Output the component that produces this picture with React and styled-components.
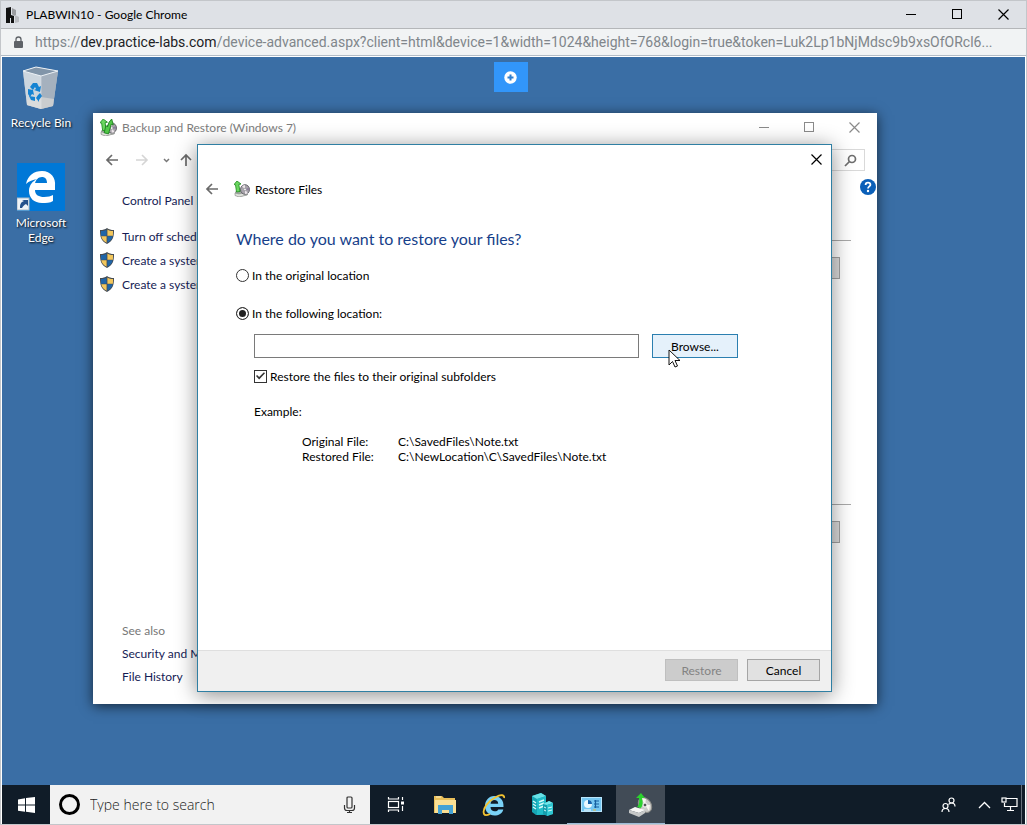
import React, { useState } from 'react';
import styled, { createGlobalStyle } from 'styled-components';

const GlobalStyle = createGlobalStyle`
  * { box-sizing: border-box; }
  html, body, #root { height: 100%; margin: 0; }
  body {
    font-family: Lato, "Open Sans", "Noto Sans", sans-serif;
    font-size: 12px;
    line-height: 15px;
    color: #000;
    overflow: hidden;
  }
  button, input { font: inherit; color: inherit; }
  button { border: 0; padding: 0; background: none; }
  a { text-decoration: none; color: inherit; }
  svg { display: block; flex: none; }
`;

/* ---------- browser chrome ---------- */

const Browser = styled.div`
  display: flex;
  flex-direction: column;
  height: 100vh;
  background: #fff;
  border: 1px solid #c3c6ca;
`;

const BrowserTitle = styled.header`
  display: flex;
  align-items: center;
  height: 28px;
  padding-left: 4px;
  gap: 6px;
  background: #dee1e6;
  border-bottom: 1px solid #b4b6b9;
`;

const Caption = styled.span`
  flex: 1;
  white-space: nowrap;
`;

const CaptionGroup = styled.div`
  display: flex;
  flex: none;
`;

const WindowButton = styled.button`
  display: flex;
  align-items: center;
  justify-content: center;
  flex: none;
  width: ${({ $w }) => $w || 46}px;
  height: 28px;
  color: ${({ $dim }) => ($dim ? '#8a8a8a' : '#000')};
`;

const AddressBar = styled.div`
  display: flex;
  align-items: center;
  gap: 11px;
  height: 27px;
  padding: 0 12px;
  font-family: Roboto, "Open Sans", sans-serif;
  font-size: 14px;
  line-height: 20px;
  color: #80868b;
  background: #f1f3f4;
  border-bottom: 1px solid #b2bcc6;
`;

const Url = styled.span`
  flex: 1;
  min-width: 0;
  white-space: nowrap;
  overflow: hidden;

  b {
    font-weight: 400;
    color: #202124;
  }
`;

/* ---------- desktop ---------- */

const Remote = styled.div`
  flex: 1;
  display: flex;
  flex-direction: column;
  min-height: 0;
  margin: 1px 1px 0;
`;

const Desktop = styled.main`
  position: relative;
  flex: 1;
  min-height: 0;
  background: #3a6ea5;
`;

const Shortcuts = styled.div`
  display: flex;
  flex-direction: column;
  width: 78px;
  gap: 33px;
  padding-top: 8px;
`;

const Shortcut = styled.a`
  display: flex;
  flex-direction: column;
  align-items: center;
  gap: 4px;
  color: #fff;
  text-align: center;
  text-shadow: 1px 1px 2px #000;
`;

const ExpandButton = styled.button`
  position: absolute;
  top: 5px;
  left: 50%;
  margin-left: -20px;
  display: flex;
  align-items: center;
  justify-content: center;
  width: 34px;
  height: 30px;
  background: #3296fa;
`;

/* ---------- backup window ---------- */

const BackupWindow = styled.section`
  position: absolute;
  left: 91px;
  top: 56px;
  width: 784px;
  height: 591px;
  display: flex;
  flex-direction: column;
  background: #fff;
  box-shadow: 0 2px 12px rgba(0, 0, 0, 0.65);
`;

const WindowTitle = styled.div`
  display: flex;
  align-items: center;
  height: 28px;
  padding-left: 7px;
  gap: 5px;
  color: #7d7d7d;
`;

const NavBar = styled.div`
  display: flex;
  align-items: center;
  height: 38px;
  padding: 0 12px;
`;

const NavButton = styled.button`
  display: flex;
  align-items: center;
  justify-content: center;
  width: ${({ $w }) => $w}px;
  height: 22px;
`;

const NavSearch = styled.label`
  display: flex;
  align-items: center;
  width: 180px;
  height: 22px;
  margin-left: auto;
  padding-right: 7px;
  border: 1px solid #d9d9d9;

  input {
    flex: 1;
    min-width: 0;
    border: 0;
    outline: 0;
    background: none;
  }
`;

const WindowBody = styled.div`
  flex: 1;
  display: flex;
  min-height: 0;
`;

const Sidebar = styled.nav`
  display: flex;
  flex-direction: column;
  width: 200px;
  padding: 9px 0 16px 6px;
  color: #151c55;
`;

const SideLink = styled.a`
  display: flex;
  align-items: center;
  gap: 7px;
  height: ${({ $h }) => $h || 24}px;
  padding-left: ${({ $indent }) => ($indent ? 23 : 0)}px;
  white-space: nowrap;
`;

const Tasks = styled.div`
  padding-top: 12px;
`;

const SeeAlso = styled.div`
  margin-top: auto;

  h2 {
    margin: 0;
    padding-left: 23px;
    font-size: 12px;
    font-weight: 400;
    line-height: 23px;
    color: #777;
  }
`;

const Content = styled.div`
  flex: 1;
  padding-top: 61px;
`;

const ContentSection = styled.section`
  height: 264px;
  padding: 16px 11px 0 0;
  border-top: 1px solid #a9a9a9;
`;

const GreyButton = styled.button`
  display: block;
  width: 130px;
  height: 22px;
  margin-left: auto;
  background: #dcdcdc;
  border: 1px solid #a2a2a2;
`;

const HelpColumn = styled.div`
  width: 26px;
  padding-left: 9px;
`;

/* ---------- restore dialog ---------- */

const Dialog = styled.section`
  position: absolute;
  left: 195px;
  top: 87px;
  width: 635px;
  height: 548px;
  display: flex;
  flex-direction: column;
  background: #fff;
  border: 1px solid #2f7fa3;
  box-shadow: 0 3px 20px rgba(0, 0, 0, 0.45);
`;

const DialogTop = styled.div`
  display: flex;
  justify-content: flex-end;
`;

const DialogHeader = styled.div`
  display: flex;
  align-items: center;
  height: 32px;
  padding-left: 7px;

  button { margin-right: 15px; }
  span { margin-left: 5px; }
`;

const DialogBody = styled.form`
  flex: 1;
  padding: 23px 38px 0;
`;

const Heading = styled.h1`
  margin: 0 0 17px;
  font-size: 16px;
  font-weight: 400;
  line-height: 22px;
  color: #173f8a;
`;

const Choice = styled.label`
  display: flex;
  align-items: center;
  gap: 3px;
  height: 16px;
  margin-bottom: ${({ $space }) => $space || 0}px;
`;

const Radio = styled.input`
  appearance: none;
  width: 13px;
  height: 13px;
  margin: 0;
  border: 1px solid #333;
  border-radius: 50%;
  background: #fff;

  &:checked {
    background: #222;
    box-shadow: inset 0 0 0 2px #fff;
  }
`;

const Checkbox = styled.input`
  appearance: none;
  display: grid;
  place-items: center;
  width: 13px;
  height: 13px;
  margin: 0;
  border: 1px solid #333;

  &:checked::before {
    content: "";
    width: 9px;
    height: 9px;
    background: #333;
    clip-path: polygon(0 50%, 12% 38%, 35% 62%, 88% 8%, 100% 20%, 35% 88%);
  }
`;

const Indented = styled.div`
  padding-left: 18px;
`;

const PathRow = styled.div`
  display: flex;
  align-items: center;
  gap: 13px;
  margin-bottom: 10px;
`;

const PathInput = styled.input`
  width: 385px;
  height: 24px;
  padding: 0 4px;
  border: 1px solid #7a7a7a;
  outline: 0;
`;

const BrowseWrap = styled.div`
  position: relative;
`;

const PushButton = styled.button`
  width: ${({ $w }) => $w || 73}px;
  height: ${({ $h }) => $h || 22}px;
  background: #e1e1e1;
  border: 1px solid #a5a5a5;

  &:disabled {
    background: #ccc;
    border-color: #bfbfbf;
    color: #838383;
  }
`;

const BrowseButton = styled(PushButton)`
  display: block;
  background: #e5f1fb;
  border-color: #2b7fb0;
`;

const Pointer = styled.svg`
  position: absolute;
  left: 16px;
  top: 15px;
`;

const Example = styled.dl`
  display: grid;
  grid-template-columns: 96px 1fr;
  margin: 15px 0 0;
  padding-left: 48px;

  dt, dd { margin: 0; }
`;

const DialogFooter = styled.footer`
  display: flex;
  justify-content: flex-end;
  gap: 9px;
  height: 41px;
  padding: 8px 11px;
  background: #f0f0f0;
  border-top: 1px solid #dfdfdf;
`;

/* ---------- taskbar ---------- */

const Taskbar = styled.footer`
  display: flex;
  height: 39px;
  background: #101c28;
`;

const TaskButton = styled.button`
  display: flex;
  align-items: center;
  justify-content: center;
  width: ${({ $w }) => $w || 49}px;
  background: ${({ $active }) => ($active ? '#414b56' : 'none')};
  box-shadow: ${({ $open }) => ($open ? 'inset 0 -1px 0 #9dbbd8' : 'none')};
`;

const TaskSearch = styled.label`
  display: flex;
  align-items: center;
  gap: 9px;
  width: 320px;
  padding: 0 14px 0 8px;
  background: #f2f2f2;

  input {
    flex: 1;
    min-width: 0;
    padding: 0;
    border: 0;
    outline: 0;
    background: none;
    font-family: "Open Sans", sans-serif;
    font-size: 14px;
    font-weight: 300;
  }
  input::placeholder { color: #222; opacity: 1; }
`;

const Tray = styled.div`
  display: flex;
  align-items: center;
  margin-left: auto;
  padding-right: 3px;
  border-right: 1px solid #66707a;
  margin-right: 3px;
`;

const TrayButton = styled.button`
  display: flex;
  align-items: center;
  justify-content: center;
  width: ${({ $w }) => $w}px;
  height: 39px;
`;

/* ---------- icons ---------- */

const MinIcon = () => (
  <svg width="11" height="11" stroke="currentColor" shapeRendering="crispEdges">
    <path d="M0 5.5h10" />
  </svg>
);

const MaxIcon = () => (
  <svg width="11" height="11" fill="none" stroke="currentColor" shapeRendering="crispEdges">
    <rect x=".5" y=".5" width="9" height="9" />
  </svg>
);

const CloseIcon = () => (
  <svg width="11" height="11" stroke="currentColor" strokeWidth="1.2">
    <path d="M.5.5l10 10M10.5.5l-10 10" />
  </svg>
);

const LabsIcon = () => (
  <svg width="15" height="16">
    <path d="M1 1l5-1v8l3 1v7H6v-5H5v5H1z" fill="#111" />
    <path d="M7 1l4 2v5l-2 1-2-2z" fill="#9b9da0" />
    <path d="M10 8l4 2v5l-4 1z" fill="#b9bbbf" />
  </svg>
);

const LockIcon = () => (
  <svg width="11" height="13">
    <rect x="1" y="5" width="9" height="7" rx="1" fill="#5f6368" />
    <path d="M3 5.500V3.500a2.500 2.500 0 0 1 5 0v2" fill="none" stroke="#5f6368" strokeWidth="1.300" />
  </svg>
);

const BinIcon = () => (
  <svg width="42" height="46" viewBox="0 0 42 46">
    <path d="M3 6l13-4 22 4-5 35-12 3-14-4z" fill="#b4c0cc" />
    <path d="M3 6l18 4v34L7 40z" fill="#cdd6de" />
    <path d="M21 10l17-4-5 35-12 3z" fill="#a5b1be" />
    <path d="M7 35l14-3 13 2-1 7-12 3-14-4z" fill="#e3e0da" opacity=".6" />
    <path d="M3 6l13-4 22 4-17 5z" fill="#8195a9" />
    <path d="M3 6l13-4 22 4-17 5z" fill="none" stroke="#edf2f6" />
    <path d="M21 11v33" stroke="#dbe3ea" strokeWidth=".6" />
    <g fill="#1583d2">
      <path d="M10 22l3-4 4 0 2 4 2-1-1 6-6-2 2-1-1-2-2 3z" />
      <path d="M8 24l5 1 1 5-2-1-2 3-2-3z" />
      <path d="M9 31l6 1v4l-4-1zM17 31l3-3 2 3-3 4v2l-3-4 2-3z" />
    </g>
  </svg>
);

const EdgeIcon = () => (
  <svg width="48" height="48" viewBox="0 0 48 48">
    <rect width="48" height="48" fill="#0078d7" />
    <path
      d="M9 21C11 12 17 8 25 8c9 0 14 7 13 15v4H18c0 5 4 7 9 7 4 0 7-1 9-2v6c-3 2-7 2-11 2-8 0-13-5-13-12 0-6 4-10 8-12-4 1-8 2-11 5zm9-1h12c0-4-2-6-5-6-4 0-6 3-7 6z"
      fill="#fff"
    />
    <rect x="0" y="35" width="12" height="12" fill="#eef3f8" stroke="#aab9c7" />
    <path d="M3 45c0-4 1-6 4-7l-2-1h6v6l-2-2c-2 1-3 2-4 4z" fill="#24518c" />
  </svg>
);

const DriveIcon = ({ size = 16, double }) => (
  <svg width={size} height={size} viewBox="0 0 16 16">
    <path d="M1 11l4-3 9 2v4l-9 2-4-2z" fill="#a3a8a3" />
    <path d="M1 12l4 1 8-2v3l-8 2-4-1.500z" fill="#dfe1dc" stroke="#848884" strokeWidth=".6" />
    <ellipse cx="11" cy="8.500" rx="4.500" ry="4.800" fill="#a9a5ac" stroke="#5e5e64" strokeWidth=".9" />
    <path d="M11 8.500l-3-3.500 3-1zM11 8.500l3 4-3 .5z" fill="#ece5ea" />
    <path d="M11 8.500l4-2v3z" fill="#8d7f9d" />
    <circle cx="11" cy="8.500" r="1.300" fill="#f6f6f6" stroke="#77777c" strokeWidth=".5" />
    <path d="M3 0L0 3.500l1.500.3L2.500 11 6 10.500 4.800 3.500 7 3z" fill="#6bd65f" stroke="#1c8a1c" strokeWidth=".8" />
    {double && <path d="M11 0L8.500 3 7 7.500 5.500 6 4 13l4 1 2.500-9 2 .5z" fill="#52c848" stroke="#197d1b" strokeWidth=".8" />}
  </svg>
);

const TaskDriveIcon = () => (
  <svg width="25" height="24" viewBox="0 0 25 24">
    <ellipse cx="17" cy="12" rx="6" ry="8" transform="rotate(-35 17 12)" fill="#cbcbc8" stroke="#8a8a86" />
    <path d="M17 12l-4-7 5 1zM17 12l4 6 1-6z" fill="#f7f4ee" />
    <circle cx="17" cy="12" r="2" fill="#555" stroke="#fff" />
    <path d="M1 17l6-3 10 3-6 3z" fill="#f8f8f6" />
    <path d="M1 17l10 3v4l-10-4zM11 20l6-3v3l-6 4z" fill="#c6c8c8" />
    <path d="M13 0l-5 5 3 0c0 3 1 6-2 9l4 1c2-3 2-6 1-10l3 0z" fill="#2cd22e" />
  </svg>
);

const ShieldIcon = () => (
  <svg width="16" height="16" viewBox="0 0 16 16">
    <path d="M8 0c2 1.500 4 2 7 2 0 7-1 11-7 14C2 13 1 9 1 2c3 0 5-.5 7-2z" fill="#454b51" />
    <path d="M7.600 1.500v6.200H2C2 6 2 4.500 2 3c2 0 4-.5 5.600-1.500zM8.400 8.300h5.300c-.6 3-2.300 5-5.300 6.500z" fill="#1f65a8" />
    <path d="M8.400 1.500C10 2.500 12 3 14 3c0 1.500 0 3-.1 4.700H8.400zM7.600 8.300H2.200c.6 3 2.400 5 5.400 6.500z" fill="#f3c75c" />
  </svg>
);

const ArrowIcon = ({ color = '#6a6a6a', up }) => (
  <svg width="14" height="14" fill="none" stroke={color} strokeWidth="1.700">
    <path d={up ? 'M7 13V2M2 7l5-5 5 5' : 'M13 7H2M7 2L2 7l5 5'} />
  </svg>
);

const ForwardIcon = () => (
  <svg width="14" height="14" fill="none" stroke="#d5d5d5" strokeWidth="1.600">
    <path d="M1 7h11M7 2l5 5-5 5" />
  </svg>
);

const HelpIcon = () => (
  <svg width="16" height="16" viewBox="0 0 16 16">
    <circle cx="8" cy="8" r="8" fill="#0a5fb8" />
    <path d="M5.600 5.900C5.600 4.500 6.600 3.600 8 3.600s2.400.8 2.400 2.100C10.400 7.400 8 7.500 8 9.600" fill="none" stroke="#fff" strokeWidth="1.800" />
    <circle cx="8" cy="12" r="1.200" fill="#fff" />
  </svg>
);

const WindowsIcon = () => (
  <svg width="17" height="16" fill="#fff">
    <path d="M0 2.400L7 1.300v6.200H0zM8 1.100L17 0v7.500H8zM0 8.500h7v6.200l-7-1zM8 8.500h9V16l-9-1.200z" />
  </svg>
);

const MicIcon = () => (
  <svg width="13" height="18" fill="none" stroke="#333" strokeWidth="1.200">
    <rect x="4" y="1" width="5" height="11" rx="1" />
    <path d="M1.500 9v3c0 1.500 1 2.500 2.500 2.500h5c1.500 0 2.500-1 2.500-2.500V9M6.500 14.500v2M4 16.500h5" />
  </svg>
);

const TaskViewIcon = () => (
  <svg width="17" height="17" fill="none" stroke="#fff" strokeWidth="1.200">
    <path d="M1.500 1v2h10V1M1.500 16v-2h10v2M15.500 1v3M15.500 10v5" />
    <rect x="1.500" y="5.500" width="10" height="6" />
    <rect x="14" y="5.500" width="3" height="3" fill="#fff" stroke="none" />
  </svg>
);

const FolderIcon = () => (
  <svg width="22" height="19" viewBox="0 0 22 19">
    <path d="M0 1h8l2 2h11v15H0z" fill="#e9bf5a" />
    <path d="M1 5h21v13H1z" fill="#fbe094" />
    <path d="M4 10h15v9h-4v-4H8v4H4z" fill="#45a2d4" />
    <path d="M2 2h5" stroke="#fff3c8" />
  </svg>
);

const IeIcon = () => (
  <svg width="24" height="24" viewBox="0 0 24 24">
    <path
      d="M12 3c6 0 10 4 9.500 11H8.500c0 3 2 4.300 4.200 4.300 1.800 0 3-.7 3.600-1.900h5c-1 4-4.700 6-8.800 6C7 22.400 3 18.500 3 13S7 3 12 3zM8.600 10.700h7.600c0-2.300-1.600-3.600-3.700-3.600-2.200 0-3.700 1.400-3.900 3.600z"
      fill="#7ad2f7"
    />
    <path d="M22 5c1-3-3-4-8-1C6 8 0 16 2 21c1 2 4 1 6 0" fill="none" stroke="#f4c330" strokeWidth="1.800" />
  </svg>
);

const ServerIcon = () => (
  <svg width="23" height="23" viewBox="0 0 23 23">
    <path d="M1 3l9-3 5 3v19H5l-4-3z" fill="#16a5b4" />
    <path d="M1 3l9-3 5 3-9 3z" fill="#68e1e7" />
    <path d="M6 6l9-3v18l-9 1z" fill="#21bdc9" />
    <path d="M2 8l3 2M2 11l3 2M2 14l3 2M8 9l5-2M8 12l5-2M8 15l5-2" stroke="#d5fafa" strokeWidth="1.400" />
    <path d="M12 11l6-3 4 2v11l-6 2-4-2z" fill="#149dad" />
    <path d="M12 11l6-3 4 2-6 2z" fill="#72e7eb" />
    <path d="M16 12l6-2v11l-6 2z" fill="#2fc6d1" />
    <path d="M13 14l2 1M13 17l2 1M17 15l4-1M17 18l4-1" stroke="#d5fafa" />
  </svg>
);

const PanelIcon = () => (
  <svg width="21" height="16" viewBox="0 0 21 16">
    <rect x=".5" y=".5" width="20" height="14" fill="#75c7f2" stroke="#b9e5fb" />
    <circle cx="7" cy="7" r="4" fill="#e9f7fe" />
    <path d="M7 7V3a4 4 0 0 1 4 4z" fill="#1765ae" />
    <path d="M13 4h5M13 7h5M13 10h5M14.500 3v8" stroke="#175f9f" strokeWidth="1.200" />
    <path d="M3 13h7" stroke="#fff" />
    <path d="M12 13h3" stroke="#e9b53a" />
  </svg>
);

const PeopleIcon = () => (
  <svg width="15" height="16" fill="none" stroke="#fff" strokeWidth="1.200">
    <circle cx="10.500" cy="3.500" r="2.500" />
    <circle cx="4.500" cy="9" r="2.500" />
    <path d="M1 15c0-2.300 1.500-3.500 3.500-3.500S8 12.700 8 15M7.500 7.500c1-1.200 2-1.500 3-1.500 2 0 3.500 1.500 3.500 3.500" />
  </svg>
);

const NetworkIcon = () => (
  <svg width="17" height="15" fill="none" stroke="#fff" strokeWidth="1.200">
    <path d="M5 1.500h11v8H3.500V6M9.500 9.500V13M6 13.500h7" />
    <rect x="1" y="1" width="4" height="4" />
  </svg>
);

const tasks = ['Turn off schedule', 'Create a system image', 'Create a system repair disc'];

const CaptionButtons = ({ dim, width }) => (
  <CaptionGroup>
    <WindowButton $dim={dim} $w={width} aria-label="Minimize"><MinIcon /></WindowButton>
    <WindowButton $dim={dim} $w={width} aria-label="Maximize"><MaxIcon /></WindowButton>
    <WindowButton $dim={dim} $w={width} aria-label="Close"><CloseIcon /></WindowButton>
  </CaptionGroup>
);

const BackupAndRestore = () => (
  <BackupWindow>
    <WindowTitle>
      <DriveIcon size={17} double />
      <Caption>Backup and Restore (Windows 7)</Caption>
      <CaptionButtons dim width={45} />
    </WindowTitle>
    <NavBar>
      <NavButton $w={14} aria-label="Back"><ArrowIcon /></NavButton>
      <NavButton $w={46} aria-label="Forward"><ForwardIcon /></NavButton>
      <NavButton $w={2} aria-label="Recent locations">
        <svg width="7" height="5" fill="none" stroke="#777" strokeWidth="1.500"><path d="M1 1l2.500 2.500L6 1" /></svg>
      </NavButton>
      <NavButton $w={38} aria-label="Up"><ArrowIcon up /></NavButton>
      <NavSearch>
        <input type="text" aria-label="Search Control Panel" />
        <svg width="13" height="13" fill="none" stroke="#6e6e6e" strokeWidth="1.700">
          <circle cx="8" cy="5" r="3.500" />
          <path d="M5.500 7.500L1 12" />
        </svg>
      </NavSearch>
    </NavBar>
    <WindowBody>
      <Sidebar>
        <SideLink href="#home" $indent>Control Panel Home</SideLink>
        <Tasks>
          {tasks.map((task) => (
            <SideLink href="#task" key={task}><ShieldIcon />{task}</SideLink>
          ))}
        </Tasks>
        <SeeAlso>
          <h2>See also</h2>
          <SideLink href="#security" $indent $h={23}>Security and Maintenance</SideLink>
          <SideLink href="#history" $indent $h={23}>File History</SideLink>
        </SeeAlso>
      </Sidebar>
      <Content>
        <ContentSection><GreyButton aria-label="Change settings" /></ContentSection>
        <ContentSection><GreyButton aria-label="Restore my files" /></ContentSection>
      </Content>
      <HelpColumn>
        <button aria-label="Help"><HelpIcon /></button>
      </HelpColumn>
    </WindowBody>
  </BackupWindow>
);

const RestoreDialog = () => {
  const [place, setPlace] = useState('following');
  const [path, setPath] = useState('');
  const [keep, setKeep] = useState(true);

  return (
    <Dialog>
      <DialogTop>
        <WindowButton $w={30} aria-label="Close"><CloseIcon /></WindowButton>
      </DialogTop>
      <DialogHeader>
        <button aria-label="Back"><ArrowIcon /></button>
        <DriveIcon />
        <span>Restore Files</span>
      </DialogHeader>
      <DialogBody id="restore" onSubmit={(e) => e.preventDefault()}>
        <Heading>Where do you want to restore your files?</Heading>
        <Choice $space={22}>
          <Radio type="radio" name="place" checked={place === 'original'} onChange={() => setPlace('original')} />
          In the original location
        </Choice>
        <Choice $space={13}>
          <Radio type="radio" name="place" checked={place === 'following'} onChange={() => setPlace('following')} />
          In the following location:
        </Choice>
        <Indented>
          <PathRow>
            <PathInput type="text" aria-label="Restore location" value={path} onChange={(e) => setPath(e.target.value)} />
            <BrowseWrap>
              <BrowseButton type="button" $w={86} $h={24}>Browse...</BrowseButton>
              <Pointer width="13" height="20" viewBox="0 0 13 20">
                <path d="M1 1v15l3.500-3.500L7 18l2.500-1L7 11.500h5z" fill="#fff" stroke="#111" />
              </Pointer>
            </BrowseWrap>
          </PathRow>
          <Choice $space={20}>
            <Checkbox type="checkbox" checked={keep} onChange={(e) => setKeep(e.target.checked)} />
            Restore the files to their original subfolders
          </Choice>
          <div>Example:</div>
          <Example>
            <dt>Original File:</dt>
            <dd>C:\SavedFiles\Note.txt</dd>
            <dt>Restored File:</dt>
            <dd>C:\NewLocation\C\SavedFiles\Note.txt</dd>
          </Example>
        </Indented>
      </DialogBody>
      <DialogFooter>
        <PushButton form="restore" disabled>Restore</PushButton>
        <PushButton type="button">Cancel</PushButton>
      </DialogFooter>
    </Dialog>
  );
};

const App = () => (
  <>
    <GlobalStyle />
    <Browser>
      <BrowserTitle>
        <LabsIcon />
        <Caption>PLABWIN10 - Google Chrome</Caption>
        <CaptionButtons />
      </BrowserTitle>
      <AddressBar>
        <LockIcon />
        <Url>
          https://<b>dev.practice-labs.com</b>/device-advanced.aspx?client=html&amp;device=1&amp;width=1024&amp;height=768&amp;login=true&amp;token=Luk2Lp1bNjMdsc9b9xsOfORcl6...
        </Url>
      </AddressBar>
      <Remote>
        <Desktop>
          <Shortcuts>
            <Shortcut href="#bin"><BinIcon />Recycle Bin</Shortcut>
            <Shortcut href="#edge"><EdgeIcon />Microsoft<br />Edge</Shortcut>
          </Shortcuts>
          <ExpandButton aria-label="Show toolbar">
            <svg width="13" height="13">
              <circle cx="6.500" cy="6.500" r="6.200" fill="#fff" />
              <path d="M6.500 3.500v6M3.500 6.500h6" stroke="#2f7fd0" strokeWidth="2" />
            </svg>
          </ExpandButton>
          <BackupAndRestore />
          <RestoreDialog />
        </Desktop>
        <Taskbar>
          <TaskButton $w={48} aria-label="Start"><WindowsIcon /></TaskButton>
          <TaskSearch>
            <svg width="23" height="23"><circle cx="11.500" cy="11.500" r="9" fill="none" stroke="#000" strokeWidth="3" /></svg>
            <input type="text" placeholder="Type here to search" aria-label="Type here to search" />
            <MicIcon />
          </TaskSearch>
          <TaskButton $w={50} aria-label="Task View"><TaskViewIcon /></TaskButton>
          <TaskButton aria-label="File Explorer"><FolderIcon /></TaskButton>
          <TaskButton aria-label="Internet Explorer"><IeIcon /></TaskButton>
          <TaskButton aria-label="Server Manager"><ServerIcon /></TaskButton>
          <TaskButton $open aria-label="Control Panel"><PanelIcon /></TaskButton>
          <TaskButton $open $active aria-label="Backup and Restore"><TaskDriveIcon /></TaskButton>
          <Tray>
            <TrayButton $w={40} aria-label="People"><PeopleIcon /></TrayButton>
            <TrayButton $w={32} aria-label="Show hidden icons">
              <svg width="13" height="8" fill="none" stroke="#fff" strokeWidth="1.300"><path d="M1 7l5.500-5.500L12 7" /></svg>
            </TrayButton>
            <TrayButton $w={18} aria-label="Network"><NetworkIcon /></TrayButton>
          </Tray>
        </Taskbar>
      </Remote>
    </Browser>
  </>
);

export default App;
